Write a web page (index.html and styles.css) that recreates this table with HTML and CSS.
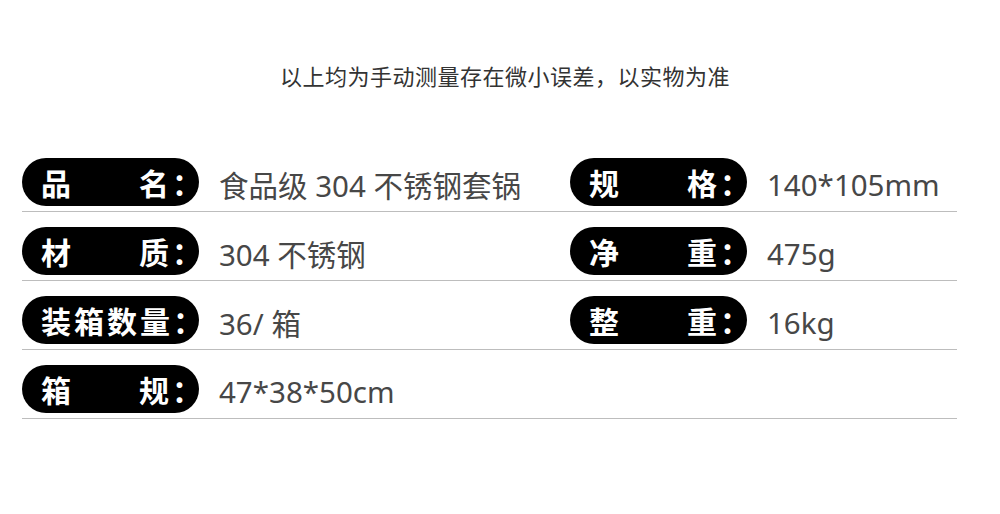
FILE: index.html
```html
<!DOCTYPE html>
<html lang="zh-CN">
<head>
    <meta charset="UTF-8">
    <meta name="viewport" content="width=device-width, initial-scale=1.0">
    <link rel="stylesheet" href="styles.css">
    <title>产品参数</title>
</head>
<body>
    <div class="spec-page">
        <p class="note">以上均为手动测量存在微小误差，以实物为准</p>

        <div class="spec-table">
            <div class="spec-row">
                <div class="spec-cell">
                    <div class="tag"><span>品</span><span>名：</span></div>
                    <div class="value">食品级 304 不锈钢套锅</div>
                </div>
                <div class="spec-cell">
                    <div class="tag"><span>规</span><span>格：</span></div>
                    <div class="value">140*105mm</div>
                </div>
            </div>
            <div class="spec-row">
                <div class="spec-cell">
                    <div class="tag"><span>材</span><span>质：</span></div>
                    <div class="value">304 不锈钢</div>
                </div>
                <div class="spec-cell">
                    <div class="tag"><span>净</span><span>重：</span></div>
                    <div class="value">475g</div>
                </div>
            </div>
            <div class="spec-row">
                <div class="spec-cell">
                    <div class="tag"><span>装箱数量：</span></div>
                    <div class="value">36/ 箱</div>
                </div>
                <div class="spec-cell">
                    <div class="tag"><span>整</span><span>重：</span></div>
                    <div class="value">16kg</div>
                </div>
            </div>
            <div class="spec-row">
                <div class="spec-cell">
                    <div class="tag"><span>箱</span><span>规：</span></div>
                    <div class="value">47*38*50cm</div>
                </div>
                <div class="spec-cell"></div>
            </div>
        </div>
    </div>
</body>
</html>
```

FILE: styles.css
```css
body {
    margin: 0;
    padding: 0;
    background: #ffffff;
    font-family: "Noto Sans", "Noto Sans CJK SC", sans-serif;
}

.spec-page {
    width: 1000px;
    height: 514px;
    overflow: hidden;
}

.note {
    margin: 0;
    padding-top: 60px;
    padding-left: 10px;
    text-align: center;
    font-family: "Noto Sans CJK SC", sans-serif;
    font-size: 22px;
    letter-spacing: 0.5px;
    line-height: 30px;
    color: #333333;
}

.spec-table {
    margin: 0 43px 0 22px;
    padding-top: 68px;
}

.spec-row {
    display: grid;
    grid-template-columns: 548px 1fr;
    padding-bottom: 5px;
    border-bottom: 1px solid #bdbdbd;
    margin-bottom: 15px;
}

.spec-cell {
    display: flex;
    align-items: center;
    height: 48px;
}

.tag {
    display: flex;
    flex-shrink: 0;
    justify-content: space-between;
    align-items: center;
    box-sizing: border-box;
    width: 177px;
    height: 48px;
    padding: 0 0 0 19px;
    background: #000000;
    border-radius: 24px;
    color: #ffffff;
    font-family: "Noto Sans CJK SC", sans-serif;
    font-weight: bold;
    font-size: 30px;
    letter-spacing: 3px;
    line-height: 48px;
    white-space: nowrap;
}

.tag span {
    flex-shrink: 0;
}

.tag span:last-child {
    margin-right: -6px;
}

.value {
    margin-left: 20px;
    font-size: 29.5px;
    color: #474747;
    padding-top: 4px;
    white-space: nowrap;
}
```
